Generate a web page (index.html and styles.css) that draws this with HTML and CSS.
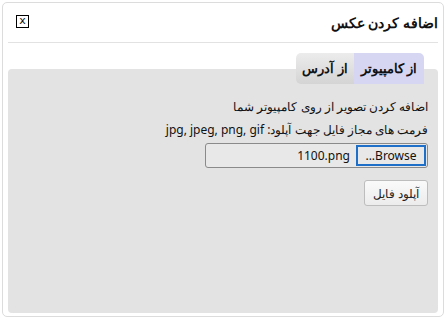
FILE: index.html
```html
<!DOCTYPE html>
<html lang="fa" dir="rtl">
<head>
    <meta charset="UTF-8">
    <title>اضافه کردن عکس</title>
    <link rel="stylesheet" href="styles.css">
</head>
<body>
<div class="dialog">
    <div class="dialog-head">
        <h1 class="dialog-title">اضافه کردن عکس</h1>
        <span class="close-btn" dir="ltr">x</span>
    </div>
    <div class="panel">
        <ul class="tabs">
            <li class="tab active">از کامپیوتر</li>
            <li class="tab">از آدرس</li>
        </ul>
        <div class="panel-body">
            <p class="line">اضافه کردن تصویر از روی کامپیوتر شما</p>
            <p class="line">فرمت های مجاز فایل جهت آپلود: jpg, jpeg, png, gif</p>
            <div class="file-input">
                <span class="browse">Browse...</span>
                <span class="file-name">1100.png</span>
            </div>
            <button class="upload-btn">آپلود فایل</button>
        </div>
    </div>
</div>
</body>
</html>
```
FILE: styles.css
```css
body {
    margin: 0;
    font-family: "Noto Sans", sans-serif;
    font-size: 12px;
    color: #111;
    background: #fff;
}

.dialog {
    margin: 2px;
    height: 315px;
    border: 1px solid #dcdcdc;
    border-radius: 5px;
    box-sizing: border-box;
    display: flex;
    flex-direction: column;
}

.dialog-head {
    display: flex;
    justify-content: space-between;
    align-items: center;
    height: 39px;
    margin: 0 5px;
    border-bottom: 1px solid #e2e2e2;
}

.dialog-title {
    margin: 0;
    font-size: 13.5px;
    font-weight: bold;
}

.close-btn {
    width: 11px;
    height: 11px;
    border: 1px solid #000;
    font-family: "DejaVu Sans", sans-serif;
    font-size: 11px;
    line-height: 10px;
    text-align: center;
    margin-left: 8px;
    margin-top: -3px;
}

.panel {
    margin: 26px 5px 3px 5px;
    flex: 1;
    background: #e3e3e3;
    border-radius: 4px;
}

.tabs {
    list-style: none;
    margin: -16px 14px 0 0;
    padding: 0;
    display: flex;
}

.tab {
    height: 31px;
    line-height: 31px;
    padding: 0 6px;
    font-size: 13px;
    font-weight: bold;
    background: linear-gradient(#ececec, #d4d4d4);
}

.tab.active {
    padding: 0 7px;
    background: #d6d6f2;
    border-radius: 0 5px 0 0;
}

.tab:last-child {
    border-radius: 5px 0 0 5px;
}

.panel-body {
    padding: 15px 10px 0 0;
}

.line {
    margin: 0 0 7px 0;
    line-height: 16px;
}

.file-input {
    width: 221px;
    height: 23px;
    border: 1px solid #8a8a8a;
    border-radius: 3px;
    background: #e8e8e8;
    display: flex;
    align-items: center;
    gap: 6px;
    margin-top: -2px;
}

.browse {
    margin-right: 1px;
    width: 66px;
    height: 17px;
    border: 2px solid #1e6fc8;
    line-height: 17px;
    text-align: center;
}

.file-name {
    direction: ltr;
}

.upload-btn {
    margin-top: 12px;
    height: 26px;
    padding: 0 8px;
    font-family: inherit;
    font-size: 12px;
    color: #222;
    background: linear-gradient(#fafafa, #ececec);
    border: 1px solid #bdbdbd;
    border-radius: 3px;
}
```
